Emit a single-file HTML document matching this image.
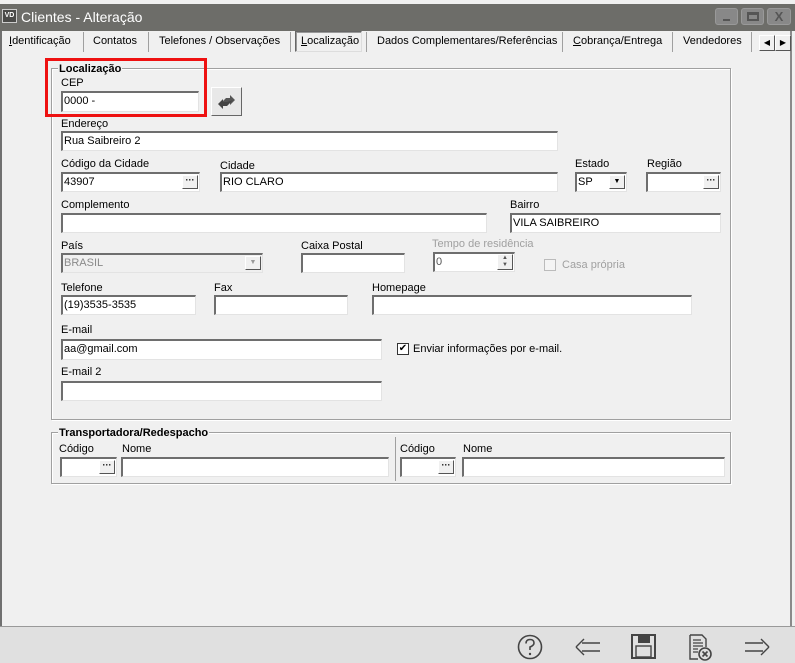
<!DOCTYPE html>
<html><head><meta charset="utf-8"><style>
*{box-sizing:border-box;margin:0;padding:0}
body{width:795px;height:663px;background:#f0f0f0;font-family:"Liberation Sans",sans-serif;font-size:11px;color:#000;position:relative;overflow:hidden}
.a{position:absolute}
.l{position:absolute;font-size:11px;white-space:nowrap}
.g{color:#a0a0a0}
.i{position:absolute;background:#fff;border-top:2px solid #6e6e6e;border-left:2px solid #6e6e6e;border-right:1px solid #e3e3e3;border-bottom:1px solid #e3e3e3;font-size:11px;padding:2px 1px;white-space:nowrap;overflow:hidden}
.dis{background:#f0f0f0;color:#8a8a8a}
.b{position:absolute;top:1px;right:1px;width:16px;height:14px;background:#f0f0f0;border:1px solid #fff;border-right-color:#555;border-bottom-color:#555;font-size:9px;font-weight:bold;text-align:center;line-height:8px}
.tab{position:absolute;top:35px;font-size:11px;white-space:nowrap}
.sep{position:absolute;top:32px;width:1px;height:20px;background:#a0a0a0}
.grp{position:absolute;border:1px solid #a0a0a0;box-shadow:inset 1px 1px 0 #fff,1px 1px 0 #fff}
.gt{position:absolute;font-weight:bold;font-size:11px;background:#f0f0f0;padding:0 1px}
</style></head><body>
<!-- title bar -->
<div class="a" style="left:0;top:4px;width:795px;height:27px;background:#6d6d69"></div>
<div class="a" style="left:2px;top:9px;width:15px;height:14px;background:#4a4a48;border:1px solid #ccc;color:#fff;font-size:7px;font-weight:bold;line-height:12px;text-align:center">VD</div>
<div class="l" style="left:21px;top:9px;font-size:14px;color:#fff">Clientes - Alteração</div>
<div class="a" style="left:715px;top:8px;width:23px;height:17px;background:#888;border-radius:3px;border:1px solid #999"><div class="a" style="left:7px;top:10px;width:7px;height:2px;background:#555"></div></div>
<div class="a" style="left:741px;top:8px;width:23px;height:17px;background:#888;border-radius:3px;border:1px solid #999"><div class="a" style="left:5px;top:3px;width:12px;height:9px;border:2px solid #555;border-top-width:3px"></div></div>
<div class="a" style="left:767px;top:8px;width:24px;height:17px;background:#888;border-radius:3px;border:1px solid #999;color:#555;font-weight:bold;font-size:13px;text-align:center;line-height:15px">X</div>
<!-- window borders -->
<div class="a" style="left:0;top:31px;width:2px;height:632px;background:#707070"></div>
<div class="a" style="left:790px;top:31px;width:2px;height:596px;background:#8a8a8a"></div>
<!-- tabs -->
<div class="tab" style="left:9px"><u>I</u>dentificação</div>
<div class="sep" style="left:83px"></div>
<div class="tab" style="left:93px">Contatos</div>
<div class="sep" style="left:148px"></div>
<div class="tab" style="left:159px">Telefones / Observações</div>
<div class="sep" style="left:290px"></div>
<div class="a" style="left:295px;top:31px;width:67px;height:21px;border:1px solid #666;border-right-color:#ddd;border-bottom-color:#ddd;box-shadow:inset 1px 1px 0 #999"></div>
<div class="tab" style="left:301px"><u>L</u>ocalização</div>
<div class="sep" style="left:366px"></div>
<div class="tab" style="left:377px">Dados Complementares/Referências</div>
<div class="sep" style="left:562px"></div>
<div class="tab" style="left:573px"><u>C</u>obrança/Entrega</div>
<div class="sep" style="left:672px"></div>
<div class="tab" style="left:683px">Vendedores</div>
<div class="sep" style="left:751px"></div>
<div class="a" style="left:759px;top:35px;width:16px;height:16px;background:#f0f0f0;border:1px solid #fff;border-right-color:#555;border-bottom-color:#555;font-size:8px;text-align:center;line-height:14px">◀</div>
<div class="a" style="left:775px;top:35px;width:16px;height:16px;background:#f0f0f0;border:1px solid #fff;border-right-color:#555;border-bottom-color:#555;font-size:8px;text-align:center;line-height:14px">▶</div>
<!-- main group -->
<div class="grp" style="left:51px;top:68px;width:680px;height:352px"></div>
<div class="gt" style="left:58px;top:63px">Localização</div>
<div class="l" style="left:61px;top:77px">CEP</div>
<div class="i" style="left:61px;top:91px;width:138px;height:21px">0000 -</div>
<div class="a" style="left:211px;top:87px;width:31px;height:29px;background:#e8e8e8;border:1px solid #fff;border-right-color:#666;border-bottom-color:#666">
<svg width="29" height="27" viewBox="0 0 29 27"><path d="M8 16 L14 10 L18 10 L18 7 L23 12 L18 17 L18 14 L14 14 Z" fill="#555"/><path d="M21 12 L15 18 L11 18 L11 21 L6 16 L11 11 L11 14 L15 14 Z" fill="#444"/></svg></div>
<div class="a" style="left:45px;top:58px;width:162px;height:59px;border:3px solid #ee1111"></div>

<div class="l" style="left:61px;top:118px">Endereço</div>
<div class="i" style="left:61px;top:131px;width:497px;height:20px">Rua Saibreiro 2</div>
<div class="l" style="left:61px;top:158px">Código da Cidade</div>
<div class="i" style="left:61px;top:172px;width:139px;height:20px">43907<div class="b">···</div></div>
<div class="l" style="left:220px;top:160px">Cidade</div>
<div class="i" style="left:220px;top:172px;width:338px;height:20px">RIO CLARO</div>
<div class="l" style="left:575px;top:158px">Estado</div>
<div class="i" style="left:575px;top:172px;width:52px;height:20px">SP<div class="b" style="font-size:7px;line-height:12px">▼</div></div>
<div class="l" style="left:647px;top:158px">Região</div>
<div class="i" style="left:646px;top:172px;width:75px;height:20px"><div class="b">···</div></div>
<div class="l" style="left:61px;top:199px">Complemento</div>
<div class="i" style="left:61px;top:213px;width:426px;height:20px"></div>
<div class="l" style="left:510px;top:199px">Bairro</div>
<div class="i" style="left:510px;top:213px;width:211px;height:20px">VILA SAIBREIRO</div>
<div class="l" style="left:61px;top:240px">País</div>
<div class="i dis" style="left:61px;top:253px;width:202px;height:20px;background:#f0f0f0">BRASIL<div class="b" style="font-size:7px;line-height:12px;color:#999">▼</div></div>
<div class="l" style="left:301px;top:240px">Caixa Postal</div>
<div class="i" style="left:301px;top:253px;width:104px;height:20px"></div>
<div class="l g" style="left:432px;top:238px">Tempo de residência</div>
<div class="i" style="left:433px;top:252px;width:82px;height:20px;color:#555">0<div class="b" style="height:16px;top:0;font-size:6px;line-height:7px">▲<br>▼</div></div>
<div class="a" style="left:544px;top:259px;width:12px;height:12px;border:1px solid #bbb;background:#f4f4f4"></div>
<div class="l g" style="left:562px;top:259px">Casa própria</div>
<div class="l" style="left:61px;top:282px">Telefone</div>
<div class="i" style="left:61px;top:295px;width:135px;height:20px">(19)3535-3535</div>
<div class="l" style="left:214px;top:282px">Fax</div>
<div class="i" style="left:214px;top:295px;width:134px;height:20px"></div>
<div class="l" style="left:372px;top:282px">Homepage</div>
<div class="i" style="left:372px;top:295px;width:320px;height:20px"></div>
<div class="l" style="left:61px;top:324px">E-mail</div>
<div class="i" style="left:61px;top:339px;width:321px;height:21px">aa@gmail.com</div>
<div class="a" style="left:397px;top:343px;width:12px;height:12px;border:1px solid #333;background:#fff;font-size:10px;line-height:10px;text-align:center">✔</div>
<div class="l" style="left:413px;top:343px">Enviar informações por e-mail.</div>
<div class="l" style="left:61px;top:366px">E-mail 2</div>
<div class="i" style="left:61px;top:381px;width:321px;height:20px"></div>
<!-- transportadora -->
<div class="grp" style="left:51px;top:432px;width:680px;height:52px"></div>
<div class="gt" style="left:58px;top:427px">Transportadora/Redespacho</div>
<div class="a" style="left:395px;top:437px;width:1px;height:44px;background:#a0a0a0"></div>
<div class="l" style="left:59px;top:443px">Código</div>
<div class="i" style="left:60px;top:457px;width:57px;height:20px"><div class="b">···</div></div>
<div class="l" style="left:122px;top:443px">Nome</div>
<div class="i" style="left:121px;top:457px;width:268px;height:20px"></div>
<div class="l" style="left:400px;top:443px">Código</div>
<div class="i" style="left:400px;top:457px;width:56px;height:20px"><div class="b">···</div></div>
<div class="l" style="left:463px;top:443px">Nome</div>
<div class="i" style="left:462px;top:457px;width:263px;height:20px"></div>
<!-- footer -->
<div class="a" style="left:0;top:626px;width:795px;height:37px;background:#e0e0e0;border-top:1px solid #999"></div>
<svg class="a" style="left:512px;top:630px" width="283" height="33" viewBox="0 0 283 33">
<g fill="none" stroke="#444" stroke-width="1.6">
<circle cx="18" cy="17" r="11.5"/>
<path d="M14 13.5 Q14 9.5 18 9.5 Q22 9.5 22 13 Q22 15.5 18 17 L18 20"/>
</g>
<circle cx="18" cy="24" r="1.2" fill="#444"/>
<path d="M64 17 L72 9 M64 17 L72 25 M70 13 L88 13 M70 21 L88 21" stroke="#444" stroke-width="1.4" fill="none"/>
<rect x="120" y="5" width="23" height="23" fill="none" stroke="#444" stroke-width="2"/>
<rect x="126" y="5" width="12" height="8" fill="#444"/>
<rect x="124" y="16" width="15" height="11" fill="none" stroke="#444" stroke-width="1.4"/>
<path d="M178 5 L190 5 L194 9 L194 17 M178 5 L178 29 L186 29" stroke="#444" stroke-width="1.4" fill="none"/>
<path d="M181 10 L189 10 M181 13 L191 13 M181 16 L191 16 M181 19 L186 19 M181 22 L186 22" stroke="#444" stroke-width="1.2"/>
<circle cx="193" cy="24" r="6" fill="#ddd" stroke="#444" stroke-width="1.6"/>
<path d="M190.5 21.5 L195.5 26.5 M195.5 21.5 L190.5 26.5" stroke="#444" stroke-width="1.6"/>
<path d="M257 17 L249 9 M257 17 L249 25 M233 13 L251 13 M233 21 L251 21" stroke="#444" stroke-width="1.4" fill="none"/>
</svg>
</body></html>
